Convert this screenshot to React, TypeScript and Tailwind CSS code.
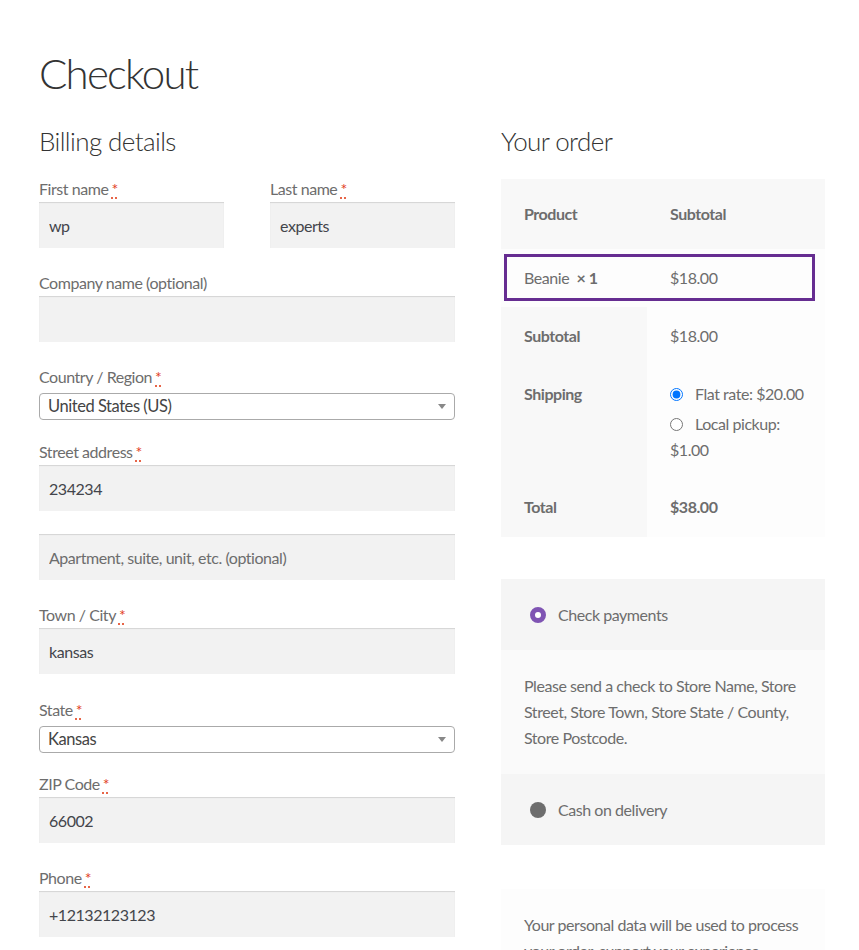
import React from 'react';

const font = "font-['Lato','Liberation_Sans',sans-serif]";

function Req() {
  return (
    <abbr
      title="required"
      className="ml-[3px] text-[#e2401c] no-underline [text-decoration:underline_dotted] [text-underline-offset:3px]"
    >
      *
    </abbr>
  );
}

function Label({ text, required = true }: { text: string; required?: boolean }) {
  return (
    <label className="block h-[26px] leading-[26px] text-[16px] text-[#6d6d6d]">
      {text}
      {required && <Req />}
    </label>
  );
}

function TextInput({ value, placeholder }: { value?: string; placeholder?: string }) {
  return (
    <input
      readOnly
      defaultValue={value}
      placeholder={placeholder}
      className="block w-full h-[46px] px-[10px] bg-[#f2f2f2] text-[16px] tracking-[-0.45px] text-[#43454b] placeholder:text-[#6d6d6d] shadow-[inset_0_1px_1px_rgba(0,0,0,0.125)] outline-none"
    />
  );
}

function SelectBox({ value }: { value: string }) {
  return (
    <div className="relative mt-[3px] h-[27px] w-full rounded-[4px] border border-[#aaaaaa] bg-white pl-[8px] leading-[25px] text-[16.5px] text-[#444444]">
      {value}
      <span className="absolute right-[8px] top-[10px] h-0 w-0 border-x-[4px] border-t-[5px] border-x-transparent border-t-[#888888]" />
    </div>
  );
}

function Field({ label, value, required = true, className = '' }: { label: string; value?: string; required?: boolean; className?: string }) {
  return (
    <div className={className}>
      <Label text={label} required={required} />
      <TextInput value={value} />
    </div>
  );
}

function PayRadio({ selected }: { selected: boolean }) {
  return selected ? (
    <span className="inline-block h-4 w-4 shrink-0 rounded-full border-[5px] border-[#7f54b3] bg-white" />
  ) : (
    <span className="inline-block h-4 w-4 shrink-0 rounded-full bg-[#6d6d6d]" />
  );
}

export default function App() {
  return (
    <div className={`${font} min-h-screen bg-white text-[16px] tracking-[-0.45px] text-[#6d6d6d]`}>
      <div className="px-[39px] pt-[48px]">
        <h1 className="text-[42px] leading-[51px] font-light tracking-[-1.8px] text-[#333333]">Checkout</h1>

        <div className="mt-[21px] flex gap-[46px]">
          {/* Billing */}
          <div className="w-[416px] shrink-0">
            <h3 className="text-[26px] leading-[42px] font-light tracking-[-0.6px] text-[#333333]">Billing details</h3>

            <div className="mt-[14px] flex gap-[46px]">
              <Field label="First name" value="wp" className="w-[185px]" />
              <Field label="Last name" value="experts" className="w-[185px]" />
            </div>

            <Field label="Company name (optional)" required={false} className="mt-[22px]" />

            <div className="mt-[22px]">
              <Label text="Country / Region" />
              <SelectBox value="United States (US)" />
            </div>

            <div className="mt-[19px]">
              <Label text="Street address" />
              <TextInput value="234234" />
            </div>
            <div className="mt-[23px]">
              <TextInput placeholder="Apartment, suite, unit, etc. (optional)" />
            </div>

            <Field label="Town / City" value="kansas" className="mt-[22px]" />

            <div className="mt-[23px]">
              <Label text="State" />
              <SelectBox value="Kansas" />
            </div>

            <Field label="ZIP Code" value="66002" className="mt-[18px]" />
            <Field label="Phone" value="+12132123123" className="mt-[22px]" />
          </div>

          {/* Order review */}
          <div className="w-[324px] shrink-0">
            <h3 className="text-[26px] leading-[42px] font-light tracking-[-0.6px] text-[#333333]">Your order</h3>

            <div className="relative mt-[17px]">
              <table className="w-full table-fixed border-collapse text-left">
                <colgroup>
                  <col className="w-[146px]" />
                  <col />
                </colgroup>
                <thead>
                  <tr className="h-[70px] bg-[#f8f8f8]">
                    <th className="px-[23px] font-bold">Product</th>
                    <th className="px-[23px] font-bold">Subtotal</th>
                  </tr>
                </thead>
                <tbody>
                  <tr className="h-[58px] bg-[#fdfdfd]">
                    <td className="px-[23px]">
                      Beanie&nbsp; <strong className="font-bold">× 1</strong>
                    </td>
                    <td className="px-[23px]">$18.00</td>
                  </tr>
                </tbody>
                <tfoot>
                  <tr className="h-[58px]">
                    <th className="bg-[#f8f8f8] px-[23px] font-bold">Subtotal</th>
                    <td className="bg-[#fdfdfd] px-[23px]">$18.00</td>
                  </tr>
                  <tr className="h-[112px]">
                    <th className="bg-[#f8f8f8] px-[23px] pt-[16px] align-top font-bold leading-[26px]">Shipping</th>
                    <td className="bg-[#fdfdfd] px-[23px] pt-[16px] align-top leading-[26px]">
                      <ul>
                        <li className="whitespace-nowrap">
                          <input type="radio" name="ship" defaultChecked className="mr-[12px] ml-0 align-[-1px]" />
                          <label>Flat rate: $20.00</label>
                        </li>
                        <li className="mt-[4px]">
                          <input type="radio" name="ship" className="mr-[12px] ml-0 align-[-1px]" />
                          <label>Local pickup: $1.00</label>
                        </li>
                      </ul>
                    </td>
                  </tr>
                  <tr className="h-[60px]">
                    <th className="bg-[#f8f8f8] px-[23px] font-bold">Total</th>
                    <td className="bg-[#fdfdfd] px-[23px] font-bold">$38.00</td>
                  </tr>
                </tfoot>
              </table>
              {/* highlight frame */}
              <div className="pointer-events-none absolute left-[3px] top-[75px] h-[47px] w-[311px] border-[3px] border-[#662d91]" />
            </div>

            {/* Payment */}
            <div className="mt-[42px]">
              <ul>
                <li className="bg-[#f5f5f5]">
                  <div className="flex h-[71px] items-center gap-[12px] px-[29px]">
                    <PayRadio selected />
                    <span>Check payments</span>
                  </div>
                  <div className="bg-[#fafafa] px-[23px] pt-[23px] pb-[23px] leading-[26px]">
                    Please send a check to Store Name, Store Street, Store Town, Store State / County, Store Postcode.
                  </div>
                </li>
                <li className="flex h-[71px] items-center gap-[12px] bg-[#f5f5f5] px-[29px]">
                  <PayRadio selected={false} />
                  <span>Cash on delivery</span>
                </li>
              </ul>

              <div className="mt-[44px] bg-[#fdfdfd] px-[23px] pt-[23px] pb-[23px] leading-[26px]">
                Your personal data will be used to process your order, support your experience throughout this website, and for other purposes described in our privacy policy.
              </div>
            </div>
          </div>
        </div>
      </div>
    </div>
  );
}
